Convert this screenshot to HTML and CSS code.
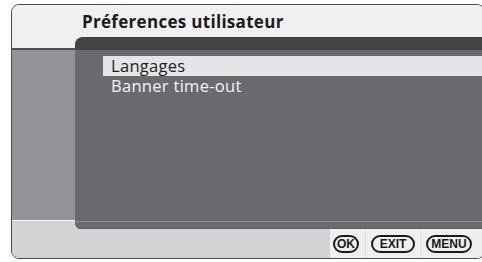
FILE: index.html
```html
<!DOCTYPE html>
<html>
<head>
<meta charset="utf-8">
<link rel="stylesheet" href="styles.css">
</head>
<body>
<div class="frame">
  <div class="header"><h1 class="title">Préferences utilisateur</h1></div>
  <div class="main">
    <div class="panel">
      <div class="panel-top"></div>
      <ul class="menu">
        <li class="item selected">Langages</li>
        <li class="item">Banner time-out</li>
      </ul>
      <div class="panel-bottom"></div>
    </div>
  </div>
  <div class="footer">
    <div class="footer-fill"></div>
    <div class="keys">
      <div class="key-cell cell-ok"><span class="key key-ok">OK</span></div>
      <div class="key-cell cell-exit"><span class="key">EXIT</span></div>
      <div class="key-cell cell-menu"><span class="key">MENU</span></div>
    </div>
  </div>
</div>
</body>
</html>
```

FILE: styles.css
```css
html, body {
  margin: 0;
  padding: 0;
  background: #ffffff;
  overflow: hidden;
}
body {
  width: 482px;
  height: 262px;
  font-family: "Open Sans", "Liberation Sans", sans-serif;
}
.frame {
  box-sizing: border-box;
  margin: 4px 0 0 11px;
  width: 474px;
  height: 255px;
  border: 1px solid #4e4e50;
  border-radius: 8px;
  overflow: hidden;
  display: flex;
  flex-direction: column;
  background: #d3d3d5;
}
.header {
  height: 43px;
  flex: none;
  background: #f0f0f2;
  border-bottom: 2px solid #505053;
  box-sizing: content-box;
}
.title {
  margin: 0;
  padding: 7px 0 0 70px;
  font-size: 17px;
  line-height: 20px;
  font-weight: 700;
  letter-spacing: 0.3px;
  color: #1c1c1c;
}
.main {
  height: 170px;
  flex: none;
  background: #939397;
  display: flex;
}
.panel {
  position: relative;
  z-index: 1;
  flex: 1;
  margin: -13px 0 -9px 63px;
  background: #6a6a6e;
  border-radius: 8px 0 0 6px;
  overflow: hidden;
  display: flex;
  flex-direction: column;
}
.panel-top {
  height: 13px;
  flex: none;
  background: #434345;
}
.menu {
  list-style: none;
  margin: 0;
  padding: 6px 0 0 28px;
  flex: 1;
}
.item {
  height: 20px;
  line-height: 20px;
  padding-left: 8px;
  font-size: 16.5px;
  color: #f4f4f4;
  letter-spacing: 0.3px;
}
.item.selected {
  background: #e5e5e7;
  color: #1e1e1e;
}
.panel-bottom {
  flex: none;
  border-top: 1px solid #8d8d91;
  background: #6c6c70;
  border-bottom: 1px solid #5c5c60;
  box-sizing: content-box;
  height: 6px;
}
.footer {
  height: 37px;
  flex: none;
  border-top: 1px solid #f6f6f6;
  display: flex;
}
.footer-fill {
  width: 318px;
  background: #d3d3d5;
}
.keys {
  flex: 1;
  display: flex;
  background: #efeff0;
  padding-top: 8px;
}
.key-cell {
  display: flex;
  align-items: center;
  height: 29px;
  box-sizing: border-box;
}
.cell-ok {
  width: 35px;
  padding-left: 3px;
}
.cell-exit {
  width: 55px;
  padding-left: 5px;
  border-left: 1px solid #e2e2e4;
}
.cell-menu {
  flex: 1;
  padding-left: 5px;
  border-left: 1px solid #e2e2e4;
}
.key {
  box-sizing: border-box;
  height: 18px;
  border: 2px solid #1a1a1a;
  border-radius: 9px;
  font-family: "Liberation Sans", "Open Sans", sans-serif;
  font-weight: 700;
  font-size: 12px;
  line-height: 14px;
  color: #1a1a1a;
  text-align: center;
  width: 44px;
}
.key-ok {
  width: 26px;
}
.cell-menu .key {
  width: 46px;
}
```
